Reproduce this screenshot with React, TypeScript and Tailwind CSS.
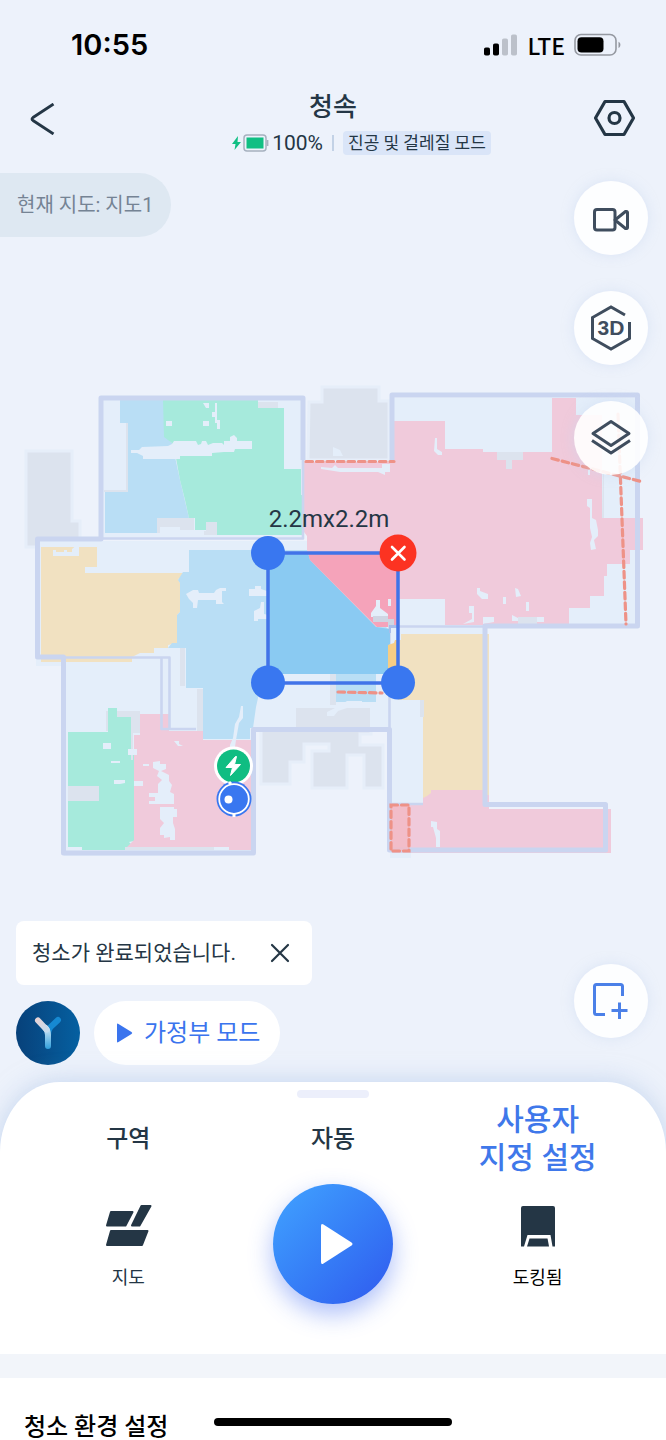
import React from "react";

const FLOOR = "#e4eefa";
const WALL = "#cad5f0";
const GREY = "#dce3ee";
const BLUE = "#b9def5";
const GREEN = "#a6eadc";
const PINK = "#f0cadb";
const YELLOW = "#f1e1c1";
const ALERT = "#ee9287";

function StatusBar() {
  return (
    <div className="flex h-[90px] items-center justify-between pr-11 pl-[71px] font-[Inter,sans-serif] text-black">
      <span className="text-[29px] leading-8 font-semibold">10:55</span>
      <div className="flex items-center gap-[9px]">
        <svg width="34" height="22" viewBox="0 0 34 22" aria-hidden="true">
          <rect x="0" y="13.500" width="6" height="8" rx="1.800" />
          <rect x="9" y="9.500" width="6" height="12" rx="1.800" />
          <rect x="18" y="4.500" width="6" height="17" rx="1.800" fill="#bcc1ca" />
          <rect x="27" y="0.500" width="6" height="21" rx="1.800" fill="#bcc1ca" />
        </svg>
        <span className="font-['Noto_Sans_CJK_KR',sans-serif] text-[23px] leading-7 font-medium">LTE</span>
        <svg width="48" height="24" viewBox="0 0 48 24" aria-hidden="true">
          <rect x="1" y="1.500" width="41" height="20.500" rx="6" fill="none" stroke="#9599a1" strokeWidth="1.600" />
          <rect x="3.500" y="4.200" width="26" height="15.200" rx="4" />
          <path d="M44.500 8.700c2.500.8 2.500 5.400 0 6.200z" fill="#9599a1" />
        </svg>
      </div>
    </div>
  );
}

function Header() {
  return (
    <header className="flex h-[75px] items-start justify-between px-[30px] text-[#243645]">
      <button type="button" aria-label="뒤로" className="mt-[13px] flex h-8 w-11 items-center">
        <svg width="26" height="32" viewBox="0 0 26 32" fill="none" stroke="currentColor" strokeWidth="2.800">
          <path d="M23.500 1 3 14.500q-2 1.500 0 3L23.500 31" />
        </svg>
      </button>
      <div className="flex flex-1 flex-col items-center">
        <h1 className="text-[26px] leading-[34px] font-medium">청속</h1>
        <div className="mt-[7px] flex items-center pl-14 text-[21px] leading-6 whitespace-nowrap">
          <svg width="38" height="20" viewBox="0 0 38 20" className="mr-[3px]" aria-hidden="true">
            <path d="M7 3 1 11h3.500L3.500 17 10 9H6.500z" fill="#10bf83" />
            <rect x="13" y="2" width="22" height="16" rx="3" fill="none" stroke="#a6b1bf" strokeWidth="1.500" />
            <rect x="15.500" y="4.500" width="17" height="11" fill="#10bf83" />
            <path d="M36.500 7v6" stroke="#a6b1bf" strokeWidth="1.800" />
          </svg>
          <span>100%</span>
          <span className="mx-[9px] h-4 w-[2px] bg-[#c3d2e6]" />
          <span className="rounded-sm bg-[#dae5f8] px-[5px] text-[17px] leading-6">진공 및 걸레질 모드</span>
        </div>
      </div>
      <button type="button" aria-label="설정" className="mt-[6px] size-11">
        <svg viewBox="0 0 44 44" fill="none" stroke="currentColor" strokeWidth="3.200" strokeLinejoin="round">
          <path d="M13 5.500h19l9.500 16.500L32 38.500H13L3.500 22z" />
          <circle cx="22.500" cy="22" r="5.500" />
        </svg>
      </button>
    </header>
  );
}

function FloorMap() {
  return (
    <svg viewBox="0 370 666 500" className="block w-full" role="img" aria-label="청소 지도">
      {/* unexplored shadows */}
      <g fill={GREY} stroke="#e6eef9" strokeWidth="3">
        <path d="M26 451H72V521H80V547H26Z" />
        <path d="M309 402H322V387H379V401H389V460H308Z" />
        <path d="M261 724H296V708H371V734H360V745H383V788H364V755H347V788H312V751H329V744H304V762H290V784H261Z" />
      </g>

      {/* floor */}
      <g fill={FLOOR}>
        <path d="M103 399H303V538H103ZM40 541H308L389 625V728H253V853H65V660H40Z" />
        <path d="M392 398H637V626H392ZM390 628H485V804H390Z" />
        <path d="M36 657H94V666H36ZM64 852H220V856H64ZM390 851H411V858H390Z" />
      </g>

      {/* room surfaces */}
      <path fill={BLUE} d="M120 400H164L166 437 172 443 180 480 189 518H157V533H105V492H128V423H120Z" />
      <path fill={GREEN} d="M163 400H258V408H284V469H301V486L304 490V535H217V522H206V530H195V518H189L185 500 180 480 176 458 172 443 164 437Z" />
      <path fill={YELLOW} d="M41 547H97V567H85V573H183V577L178 579 180 583V612L177 615V643L168 645V648H154V653H140L132 657V662H41Z" />
      <path fill={BLUE} d="M189 550H310L389 630V674H258V698L256 707 253 728H250V739H203V688H186V648H168L172 643H177V615L180 612V583L178 580 183 572H189Z" />
      <path fill={BLUE} d="M336 674H376V702H336Z" />
      <path fill={PINK} d="M304 462H394V421H445V449H483V452H552V398H576V415H602V518H643V550H630V564H607V576H604V596H590V608H569V625H445V599H399V627H376L310 560 307 550V536L304 532Z" />
      <path fill={YELLOW} d="M401 634H489V800H423V700H398V640H401Z" />
      <path fill={PINK} d="M423 798 427 796 431 793V790H483V795H489V809H611V853H392V804H423Z" />
      <path fill={GREEN} d="M68 732H108V708H117V717H131V750H134V841L129 842 132 845 125 850H82V847H68Z" />
      <path fill={PINK} d="M140 714H169V731H203V740H252V850H229V847H127L134 840V735H140Z" />

      {/* grey obstacles */}
      <g fill={GREY}>
        <path d="M157 518H194V530H180V527H160V533H157ZM206 522H217V535H204V531H206ZM258 402H278V408H258ZM126 423H128V492H104V490H126Z" />
        <path d="M68 786H99V801H68ZM117 711H140V733H133V760H131V717H117ZM106 711H108V731H106ZM180 648H185V686H180ZM197 689H203V731H197ZM330 674H336V705H330Z" />
        <path d="M497 452H523V460H512V469H506V460H497ZM518 617H537V624H518ZM420 700H424V717H420ZM603 470H604V518H602ZM125 847H214V850H125Z" />
        <path d="M296 708H370V728H296Z" />
      </g>

      {/* uncovered spots */}
      <g fill={FLOOR}>
        <path d="M131 450H139L142 447 168 446 172 444 174 441H196L198 445 201 444 202 441H206L208 445 213 443H222L224 445V441H230V437L234 435 237 438V441H252V449H235L234 452H224L212 453V456H180V459H143V456L137 453H131Z" />
        <path d="M166 421H172V426H166ZM203 421H209V426H203ZM203 403H209V408H206ZM215 403H217V420H220V429H217V423H215V417H212V412H215ZM301 486H304V495H301Z" />
        <path d="M53 550H56V552H64V550H67V552H72V549L79 543V556H53ZM186 594 193 590H198L199 593H214L216 590 220 588H226V591H222V602L224 604H216V600H198L197 608H193V603L189 599Z" />
        <path d="M249 589H255V586H261V589L267 591H274L281 583V588L271 596H249ZM261 602H264V614L272 616 278 617V619H258V621H254V611L260 608Z" />
        <path d="M103 743H111V749H103ZM111 761H120V763H111ZM114 780H125V783L120 784H114ZM128 749H137V755H128ZM134 781H143V786H134ZM174 741H179V744L183 746H178ZM143 764H149V766H143Z" />
        <path d="M153 762 160 761V764H166V769L161 771 169 775V781L172 785 170 792 174 794V799H174V804H149V801H155V797H149V793H158V784L162 780 157 776 159 771 153 768ZM160 807H174V809H177V817H173V823L175 829V840H170V837L164 838V835H160V828L164 823 160 819Z" />
        <path d="M241 706H243V718L239 723 236 740 234 754 230 758V745L233 738 235 724 239 717ZM66 847H78L82 850H66ZM215 847H227V850H215ZM431 821 437 822V829L440 831V847H436V838L433 827H431Z" />
        <path d="M321 467 332 468 335 465 338 468H382L382 464H390V472H385V475L378 472H340L334 471 321 469ZM333 447 340 450 343 456H333ZM435 438H437V449L442 452V455H438L434 451Z" />
        <path d="M587 499H592V518L596 520 598 530V536L594 540 596 549 591 550 590 543 592 537 590 528V508L587 506ZM588 467H590V475H588ZM515 588 518 589 521 596 516 597ZM477 588H480V591L488 594V599H482L477 594ZM503 597H506V604H503ZM526 602H529V611H526ZM469 606H474V622L463 624 472 619V613H469ZM483 617H494V622L483 624ZM512 615 518 618V621H512ZM537 617H544V622H537Z" />
        <path d="M389 627H484V634H389ZM327 712 337 707 347 701H362V704L350 707 338 711 334 716H327Z" />
        <path d="M576 398H602V415H576ZM398 633H401V640H398Z" />
      </g>

      {/* walls */}
      <g fill="none" stroke={WALL} strokeWidth="5" strokeLinejoin="round">
        <path d="M303 460V398H101V539H37.500V657H63.500V853H253.500V729.500H389.500V850H605.500V804.500H485V626H637.500V395H392V460" />
        <g strokeWidth="2.600">
          <path d="M303 460V538.500H103M63 657.500H169.500V729M161.500 658V729H196M389.500 729V626.500H484M392 804H423" />
        </g>
      </g>

      {/* selected zone */}
      <path fill="#8acaf2" d="M268 553H308L310 560 376 627 390 629V644L388 646V674H268Z" />
      <path fill="#f5a3ba" d="M308 553H398V627H377L310 560Z" />
      <path fill="#f7cd85" d="M388 645 394 643 395 640H398V669H388Z" />
      <path fill={FLOOR} d="M371 613 376 606V600H380V608L388 614V617H371ZM388 599H391V606H388Z" />
      <path fill="#cfd5e3" d="M373 616H388V619H394V627H388V622H373Z" />
      <path fill="#a8bdeb" d="M389 625H398V628H391V633H389Z" />

      {/* virtual walls and no-go zone */}
      <g fill="none" stroke={ALERT} strokeWidth="3.200" strokeLinecap="round" strokeDasharray="6.500 4">
        <path d="M306 461.500H394M552 458.500 643 482M618 414 626 624M338 692 382 693" />
        <path d="M391 805H409V851H391Z" fill="#f2b9c4" fillOpacity=".8" />
      </g>

      <rect x="268" y="553" width="130" height="130" fill="none" stroke="#4173e8" strokeWidth="3.500" />
      <g fill="#3977f0">
        <circle cx="268" cy="553" r="17" />
        <circle cx="268" cy="682.500" r="17" />
        <circle cx="398" cy="682.500" r="17" />
      </g>
      <circle cx="398" cy="553" r="18.500" fill="#fc3322" />
      <path d="m392 547 12.500 12.500m0-12.500L392 559.500" stroke="#fff" strokeWidth="2.600" strokeLinecap="round" />

      {/* dock and robot */}
      <circle cx="233.500" cy="766" r="19.500" fill="#fff" />
      <circle cx="233.500" cy="766" r="16.500" fill="#10bd82" />
      <path d="M235.500 756.500 226 767.500H232.500L230.500 775.500 240.500 764.500H234.500L236.500 756.500Z" fill="#fff" stroke="#fff" strokeLinejoin="round" />
      <circle cx="234" cy="799" r="17.500" fill="#3977f0" />
      <circle cx="234" cy="799" r="14.800" fill="none" stroke="#fff" strokeWidth="1.800" />
      <path d="M234 813v4M229 782l2 2" stroke="#fff" strokeWidth="3" />
      <circle cx="228.500" cy="799.500" r="4" fill="#fff" />

      <text x="329" y="527" textAnchor="middle" fontSize="24" fill="#243645">2.2mx2.2m</text>
    </svg>
  );
}

function RoundButton({ label, children }: { label: string; children: React.ReactNode }) {
  return (
    <button
      type="button"
      aria-label={label}
      className="flex size-[74px] items-center justify-center rounded-full bg-white/90 text-[#3f4d5e] shadow-[0_0_12px_rgba(200,216,242,0.5)]"
    >
      {children}
    </button>
  );
}

function MapTools() {
  return (
    <div className="absolute top-4 right-[18px] flex flex-col gap-9">
      <RoundButton label="카메라">
        <svg width="38" height="28" viewBox="0 0 38 28" className="mt-1" fill="none" stroke="currentColor" strokeWidth="3" strokeLinejoin="round">
          <rect x="2.500" y="3.500" width="20.500" height="20.500" rx="2.500" />
          <path d="M23 14 33.500 5.500q2-.5 2 1v15q0 1.500-2 1z" />
        </svg>
      </RoundButton>
      <RoundButton label="3D 지도">
        <svg width="44" height="48" viewBox="0 0 44 48" fill="none" stroke="currentColor" strokeWidth="3">
          <path d="M36 11 22 3 3.500 13.500v21L22 45l18.500-10.500V18" />
          <text x="22" y="31" textAnchor="middle" fontSize="21" fontWeight="700" fill="currentColor" stroke="none" className="font-['Liberation_Sans',sans-serif]">3D</text>
        </svg>
      </RoundButton>
      <RoundButton label="레이어">
        <svg width="42" height="38" viewBox="0 0 42 38" fill="none" stroke="currentColor" strokeWidth="3" strokeLinejoin="round">
          <path d="M21 2.500 39 14.500 21 26.500 3 14.500z" />
          <path d="M2 21.500 21 34 40 21.500" />
        </svg>
      </RoundButton>
    </div>
  );
}

function MapFooter() {
  return (
    <div className="mt-[51px] flex items-end justify-between pr-[18px] pb-[17px] pl-4">
      <div className="flex flex-col gap-4">
        <div className="flex h-16 w-74 items-center justify-between rounded-lg bg-white pr-5 pl-4 text-[#243645]">
          <p className="text-[21px] leading-8 whitespace-nowrap">청소가 완료되었습니다.</p>
          <button type="button" aria-label="닫기" className="flex size-6 items-center justify-center">
            <svg width="20" height="20" viewBox="0 0 20 20" stroke="currentColor" strokeWidth="2.200" strokeLinecap="round">
              <path d="m2 2 16 16M18 2 2 18" />
            </svg>
          </button>
        </div>
        <div className="flex gap-[14px]">
          <button type="button" aria-label="음성 도우미" className="size-16 rounded-full bg-linear-to-r from-[#07417a] to-[#0560a1]">
            <svg viewBox="0 0 64 64" fill="none" strokeLinecap="round" strokeWidth="6">
              <defs>
                <linearGradient id="stem" gradientUnits="userSpaceOnUse" x1="0" y1="26" x2="0" y2="48">
                  <stop offset="0" stopColor="#d6e8f6" />
                  <stop offset="1" stopColor="#2f9fdc" />
                </linearGradient>
                <linearGradient id="arm" gradientUnits="userSpaceOnUse" x1="20" y1="17" x2="32" y2="30">
                  <stop offset="0" stopColor="#ead2d3" />
                  <stop offset="1" stopColor="#c3dbef" />
                </linearGradient>
              </defs>
              <path d="M42 19 34.500 26Q32 29 32 35" stroke="#1689d2" />
              <path d="M32 45V34Q32 30 29.500 27" stroke="url(#stem)" />
              <path d="M30.500 28.500 22 19.500" stroke="url(#arm)" />
            </svg>
          </button>
          <button type="button" className="flex h-16 items-center gap-[11px] rounded-full bg-white pr-5 pl-[23px] text-2xl text-[#3a74ee]">
            <svg width="16" height="20" viewBox="0 0 16 20" fill="currentColor">
              <path d="M0 1.500Q0 0 1.500 1L14.500 9q1.500 1 0 2L1.500 19Q0 20 0 18.500z" />
            </svg>
            가정부 모드
          </button>
        </div>
      </div>
      <div className="mb-[27px]">
        <RoundButton label="구역 추가">
          <svg width="40" height="40" viewBox="0 0 40 40" fill="none" stroke="#4b80e8" strokeWidth="3">
            <path d="M14 33.500H5.500Q3.500 33.500 3.500 31.500V5.500Q3.500 3.500 5.500 3.500H29.500Q31.500 3.500 31.500 5.500V15M28.500 21.500V38M20.500 29.500H36.500" />
          </svg>
        </RoundButton>
      </div>
    </div>
  );
}

function ControlPanel() {
  return (
    <section className="relative rounded-t-[60px_70px] bg-white px-[26px] pb-[50px] shadow-[0_0_26px_rgba(160,188,228,0.55)]">
      <div className="flex h-4 items-end justify-center">
        <span className="h-2 w-[72px] rounded-full bg-[#eceffb]" />
      </div>
      <nav className="grid h-[82px] grid-cols-3 items-center text-center text-2xl font-medium text-[#243645]">
        <button type="button">구역</button>
        <button type="button">자동</button>
        <button type="button" className="text-[30px] leading-[38px] text-[#3f78ea]">
          사용자
          <br />
          지정 설정
        </button>
      </nav>
      <div className="mt-1 grid grid-cols-3 items-center justify-items-center text-[18px] leading-6 text-[#243645]">
        <button type="button" className="mt-[6px] flex flex-col items-center gap-[18px]">
          <svg width="50" height="44" viewBox="0 0 50 44" fill="currentColor" stroke="currentColor" strokeWidth="2" strokeLinejoin="round">
            <path d="M8 8H29.500L22.500 21.500H4ZM38.500 2H47.500L36.500 21.500H29ZM8 27H44.500L39 41H4Z" />
          </svg>
          지도
        </button>
        <button
          type="button"
          aria-label="청소 시작"
          className="flex size-30 items-center justify-center rounded-full bg-linear-to-br from-[#42a3ff] to-[#3158ee] shadow-[0_10px_24px_rgba(49,95,240,0.4)]"
        >
          <svg width="32" height="42" viewBox="0 0 32 42" fill="#fff" className="ml-2">
            <path d="M0 3Q0 0 2.500 1.500L30.500 19.500q2 1.500 0 3L2.500 40.500Q0 42 0 39z" />
          </svg>
        </button>
        <button type="button" className="mt-[6px] flex flex-col items-center gap-[18px] text-black">
          <svg width="36" height="44" viewBox="0 0 36 44" fill="#243645">
            <path d="M1 4Q1 2 3 2H33Q35 2 35 4V42.500H32.500L30.500 31H7.500L4 42.500H1Z" />
            <path d="M9.500 34.500H27.500L29 42.500H7Z" />
          </svg>
          도킹됨
        </button>
      </div>
    </section>
  );
}

export default function App() {
  return (
    <div className="w-full overflow-hidden bg-[#edf2fb] font-[Roboto,'Noto_Sans_CJK_KR',sans-serif]">
      <StatusBar />
      <Header />
      <main className="relative pt-2">
        <p className="flex h-16 w-[171px] items-center rounded-r-full bg-[#dee8f2] pl-[17px] text-xl whitespace-nowrap text-[#758394]">
          현재 지도: 지도1
        </p>
        <div className="mt-[133px]">
          <FloorMap />
        </div>
        <MapTools />
        <MapFooter />
      </main>
      <ControlPanel />
      <section className="relative border-t-[24px] border-[#f2f5fa] bg-white">
        <div className="flex h-[62px] items-end overflow-hidden pl-6">
          <h2 className="text-2xl leading-[26px] font-medium text-black">청소 환경 설정</h2>
        </div>
        <span className="absolute bottom-[14px] left-1/2 h-2 w-[238px] -translate-x-1/2 rounded-full bg-black" />
      </section>
    </div>
  );
}
